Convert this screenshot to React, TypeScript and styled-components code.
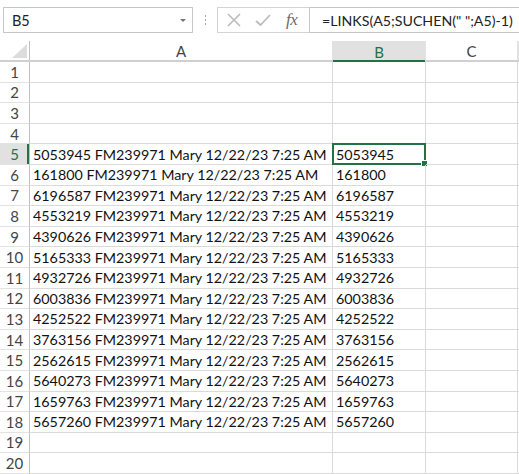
import React from "react";
import styled, { createGlobalStyle } from "styled-components";

const Global = createGlobalStyle`
  html, body { margin: 0; padding: 0; background: #fff; }
  body { font-family: "Lato", "Liberation Sans", sans-serif; }
`;

const Page = styled.div`
  width: 519px;
  height: 474px;
  overflow: hidden;
  background: #fff;
  display: flex;
  flex-direction: column;
`;

const Toolbar = styled.div`
  height: 41px;
  flex-shrink: 0;
  display: flex;
  align-items: flex-start;
  padding-top: 7px;
  padding-left: 3px;
  box-sizing: border-box;
`;

const NameBox = styled.div`
  width: 190px;
  flex-shrink: 0;
  height: 26px;
  box-sizing: border-box;
  border: 1px solid #c6c6c6;
  display: flex;
  align-items: center;
  justify-content: space-between;
  padding: 0 6px 0 8px;
  font-size: 14.5px;
  color: #222;
`;

const Arrow = styled.span`
  width: 0;
  height: 0;
  border-left: 3px solid transparent;
  border-right: 3px solid transparent;
  border-top: 3px solid #777;
`;

const Dots = styled.div`
  width: 24px;
  flex-shrink: 0;
  height: 26px;
  display: flex;
  flex-direction: column;
  align-items: center;
  justify-content: center;
  gap: 2px;
  & > span {
    width: 1px;
    height: 2px;
    background: #a8a8a8;
  }
`;

const ButtonBox = styled.div`
  width: 92px;
  flex-shrink: 0;
  height: 26px;
  box-sizing: border-box;
  border: 1px solid #d4d4d4;
  border-right: none;
  display: flex;
  align-items: center;
  padding-left: 9px;
  gap: 14px;
`;

const Fx = styled.span`
  font-family: "Liberation Serif", serif;
  font-style: italic;
  font-size: 17px;
  color: #6a6a6a;
  margin-left: 1px;
  letter-spacing: -0.5px;
`;

const FormulaBox = styled.div`
  flex: 1;
  min-width: 0;
  height: 26px;
  box-sizing: border-box;
  border: 1px solid #c6c6c6;
  border-right: none;
  display: flex;
  align-items: center;
  padding-left: 12px;
  font-size: 14.2px;
  color: #222;
  white-space: nowrap;
  overflow: hidden;
`;

const Sheet = styled.div`
  display: flex;
  flex-direction: column;
`;

const HeaderRow = styled.div`
  display: flex;
  height: 21px;
  box-sizing: border-box;
  border-bottom: 2px solid #d0d0d0;
`;

const Corner = styled.div`
  width: 30px;
  flex-shrink: 0;
  box-sizing: border-box;
  border-right: 1px solid #c0c0c0;
  display: flex;
  align-items: flex-end;
  justify-content: flex-end;
  padding: 0 2px 2px 0;
`;

const ColHead = styled.div<{ $w: number; $sel?: boolean }>`
  width: ${(p) => p.$w}px;
  flex: ${(p) => (p.$w ? "none" : "1 1 0")};
  min-width: 0;
  box-sizing: border-box;
  border-right: 1px solid #e2e2e2;
  background: ${(p) => (p.$sel ? "#e1e1e1" : "#fff")};
  color: ${(p) => (p.$sel ? "#217346" : "#444")};
  box-shadow: ${(p) => (p.$sel ? "inset 0 -2px 0 #217346" : "none")};
  margin-bottom: ${(p) => (p.$sel ? "-2px" : "0")};
  height: ${(p) => (p.$sel ? "21px" : "auto")};
  display: flex;
  align-items: center;
  justify-content: center;
  font-size: 15px;
`;

const Row = styled.div`
  display: flex;
  height: 20.6px;
  flex-shrink: 0;
`;

const RowHead = styled.div<{ $sel?: boolean }>`
  width: 30px;
  flex-shrink: 0;
  box-sizing: border-box;
  border-right: 1px solid #c0c0c0;
  border-bottom: 1px solid #e2e2e2;
  background: ${(p) => (p.$sel ? "#e1e1e1" : "#fff")};
  color: ${(p) => (p.$sel ? "#217346" : "#444")};
  box-shadow: ${(p) => (p.$sel ? "inset -2px 0 0 #217346" : "none")};
  display: flex;
  align-items: center;
  justify-content: center;
  font-size: 15px;
`;

const Cell = styled.div<{ $w: number; $clip?: boolean }>`
  width: ${(p) => p.$w}px;
  flex: ${(p) => (p.$w ? "none" : "1 1 0")};
  min-width: 0;
  box-sizing: border-box;
  border-right: 1px solid #dadada;
  border-bottom: 1px solid #dadada;
  display: flex;
  align-items: center;
  padding-left: 3px;
  font-size: 14.3px;
  color: #111;
  white-space: nowrap;
  overflow: ${(p) => (p.$clip ? "hidden" : "visible")};
  position: relative;
`;

const ActiveFrame = styled.div`
  position: absolute;
  left: -1px;
  top: -1px;
  right: -1px;
  bottom: -1px;
  border: 2px solid #217346;
  pointer-events: none;
  &::after {
    content: "";
    position: absolute;
    right: -4px;
    bottom: -4px;
    width: 5px;
    height: 5px;
    background: #217346;
    border: 1px solid #fff;
  }
`;

const data: [string, string][] = [
  ["5053945", "5053945 FM239971 Mary 12/22/23 7:25 AM"],
  ["161800", "161800 FM239971 Mary 12/22/23 7:25 AM"],
  ["6196587", "6196587 FM239971 Mary 12/22/23 7:25 AM"],
  ["4553219", "4553219 FM239971 Mary 12/22/23 7:25 AM"],
  ["4390626", "4390626 FM239971 Mary 12/22/23 7:25 AM"],
  ["5165333", "5165333 FM239971 Mary 12/22/23 7:25 AM"],
  ["4932726", "4932726 FM239971 Mary 12/22/23 7:25 AM"],
  ["6003836", "6003836 FM239971 Mary 12/22/23 7:25 AM"],
  ["4252522", "4252522 FM239971 Mary 12/22/23 7:25 AM"],
  ["3763156", "3763156 FM239971 Mary 12/22/23 7:25 AM"],
  ["2562615", "2562615 FM239971 Mary 12/22/23 7:25 AM"],
  ["5640273", "5640273 FM239971 Mary 12/22/23 7:25 AM"],
  ["1659763", "1659763 FM239971 Mary 12/22/23 7:25 AM"],
  ["5657260", "5657260 FM239971 Mary 12/22/23 7:25 AM"],
];

const COLS = [303, 93, 92, 0];

export default function App() {
  const rows = Array.from({ length: 20 }, (_, i) => i + 1);
  return (
    <Page>
      <Global />
      <Toolbar>
        <NameBox>
          <span>B5</span>
          <Arrow />
        </NameBox>
        <Dots>
          <span />
          <span />
          <span />
        </Dots>
        <ButtonBox>
          <svg width="14" height="14" viewBox="0 0 14 14">
            <path d="M1 1 L13 13 M13 1 L1 13" stroke="#bcbcbc" strokeWidth="1.6" fill="none" />
          </svg>
          <svg width="16" height="14" viewBox="0 0 16 14">
            <path d="M1 8 L5.5 12 L15 2" stroke="#bcbcbc" strokeWidth="1.8" fill="none" />
          </svg>
          <Fx>fx</Fx>
        </ButtonBox>
        <FormulaBox>=LINKS(A5;SUCHEN(" ";A5)-1)</FormulaBox>
      </Toolbar>
      <Sheet>
        <HeaderRow>
          <Corner>
            <svg width="15" height="14" viewBox="0 0 15 14">
              <polygon points="15,0 15,14 0,14" fill="#dcdcdc" />
            </svg>
          </Corner>
          <ColHead $w={303}>A</ColHead>
          <ColHead $w={93} $sel>
            B
          </ColHead>
          <ColHead $w={92}>C</ColHead>
          <ColHead $w={0} />
        </HeaderRow>
        {rows.map((r) => {
          const d = r >= 5 && r <= 18 ? data[r - 5] : null;
          return (
            <Row key={r}>
              <RowHead $sel={r === 5}>{r}</RowHead>
              <Cell $w={COLS[0]} $clip>
                {d ? d[1] : ""}
              </Cell>
              <Cell $w={COLS[1]}>
                {d ? d[0] : ""}
                {r === 5 && <ActiveFrame />}
              </Cell>
              <Cell $w={COLS[2]} />
              <Cell $w={COLS[3]} />
            </Row>
          );
        })}
      </Sheet>
    </Page>
  );
}
